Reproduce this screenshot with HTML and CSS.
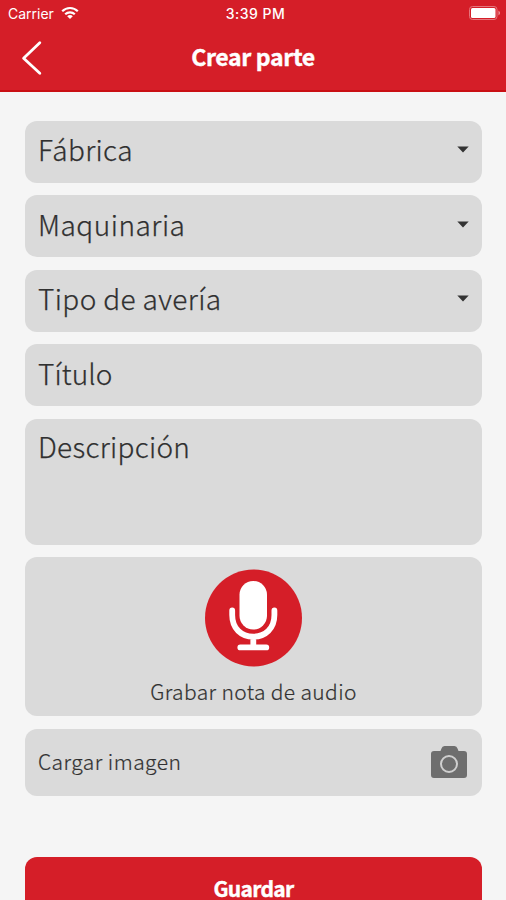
FILE: index.html
```html
<!DOCTYPE html>
<html lang="es">
<head>
<meta charset="utf-8">
<title>Crear parte</title>
<link rel="stylesheet" href="styles.css">
</head>
<body>
<header class="header">
  <div class="status">
    <div class="carrier"><span>Carrier</span>
      <svg class="wifi" width="18" height="14" viewBox="0 0 18 14" fill="none" stroke="#fff" stroke-width="2.2"><path d="M1.2 5.2C5.6.9 12.4.9 16.8 5.2M4.2 8.3c2.7-2.6 6.9-2.6 9.6 0"/><path d="M6.2 10.2c1.6-1.5 4-1.5 5.6 0L9 13z" fill="#fff" stroke="none"/></svg>
    </div>
    <span class="time">3:39 PM</span>
    <svg class="battery" width="32" height="14" viewBox="0 0 32 14"><rect x=".5" y=".5" width="27.5" height="13" rx="3" fill="none" stroke="#e5757c"/><rect x="2" y="2" width="24.5" height="10" rx="1.5" fill="#fff"/><path d="M29.5 4.5q3 2.5 0 5z" fill="#ed9da1"/></svg>
  </div>
  <nav class="nav">
    <svg class="back" width="22" height="36" viewBox="0 0 22 36" fill="none" stroke="#fff" stroke-width="2.8" stroke-linecap="round" stroke-linejoin="round"><path d="M18.800 2.800 2.600 18.200 18.800 33.200"/></svg>
    <h1 class="title">Crear parte</h1>
    <span></span>
  </nav>
</header>
<main class="form">
  <div class="field"><span class="fabrica">Fábrica</span><svg width="12" height="7" viewBox="0 0 12 7"><path d="M.3.5h11.4L6 6.5z" fill="#333"/></svg></div>
  <div class="field"><span class="maquinaria">Maquinaria</span><svg width="12" height="7" viewBox="0 0 12 7"><path d="M.3.5h11.4L6 6.5z" fill="#333"/></svg></div>
  <div class="field"><span class="tipo">Tipo de avería</span><svg width="12" height="7" viewBox="0 0 12 7"><path d="M.3.5h11.4L6 6.5z" fill="#333"/></svg></div>
  <div class="field"><span class="titulo">Título</span></div>
  <div class="field description"><span class="descripcion">Descripción</span></div>
  <div class="audio">
    <svg width="98" height="98" viewBox="0 0 98 98"><circle cx="48.500" cy="49" r="48.500" fill="#d51e28"/><rect x="34.500" y="12" width="27.500" height="48.500" rx="13.700" fill="#fff"/><g fill="none" stroke="#fff" stroke-linecap="round" stroke-width="5.800"><path d="M27.200 41.500v4.500c0 13.400 9 21.700 21.100 21.700S69.400 59.400 69.400 46v-4.500M48.300 68v10M35.300 78.400h26"/></g></svg>
    <span class="audio-label">Grabar nota de audio</span>
  </div>
  <div class="upload"><span class="upload-label">Cargar imagen</span>
    <svg width="38" height="34" viewBox="0 0 38 34"><path d="M5 6h5.500l1-2.500Q12.200 1 14.500 1h10q2.300 0 3 2.500l1 2.500H34q3 0 3 3v21q0 3-3 3H4q-3 0-3-3V9q0-3 3-3z" fill="#6e6e6e"/><circle cx="19" cy="19" r="8" fill="none" stroke="#cfcfcf" stroke-width="2"/></svg>
  </div>
  <button class="save">Guardar</button>
</main>
</body>
</html>
```
FILE: styles.css
```css
* { box-sizing: border-box; }
html { height: 100%; overflow: hidden; }
body {
  margin: 0;
  height: 900px;
  overflow: hidden;
  background: #f5f5f5;
  color: #303030;
  font-family: "Noto Sans CJK SC", "Noto Sans", sans-serif;
  font-weight: 300;
}
svg { display: block; flex: none; }
.header { height: 92px; background: #d51e28; border-bottom: 2px solid #c90f14; color: #fff; }
.status {
  height: 27px;
  padding: 0 5px 0 8px;
  display: grid;
  grid-template-columns: 1fr auto 1fr;
  align-items: center;
  font: 500 14px/27px Inter, sans-serif;
}
.carrier { display: flex; align-items: center; gap: 7px; font-weight: 400; }
.wifi { margin-top: -2px; }
.time { letter-spacing: .45px; padding-left: 2px; }
.battery { justify-self: end; margin-top: -1px; }
.nav { height: 63px; padding: 0 21px; display: grid; grid-template-columns: 1fr auto 1fr; align-items: center; }
.back { margin-top: -2px; }
.title { margin: -5px 0 0; font-size: 23px; line-height: 36px; font-weight: 700; letter-spacing: -.35px; -webkit-text-stroke: .4px #fff; }
.form { padding: 28.5px 24px 0 25px; display: flex; flex-direction: column; gap: 12.5px; }
.field {
  height: 62px;
  padding: 0 13px;
  display: flex;
  align-items: center;
  justify-content: space-between;
  border-radius: 12px;
  background: #dadada;
  font-size: 28px;
  line-height: 40px;
}
.field span { margin-top: -5px; -webkit-text-stroke: .25px #303030; }
.field svg { margin-top: -4px; }
.field.description { height: 126px; padding-top: 12px; align-items: flex-start; }
.fabrica { letter-spacing: .35px; }
.maquinaria { letter-spacing: .5px; }
.tipo { letter-spacing: .38px; }
.titulo { letter-spacing: .1px; }
.descripcion { letter-spacing: .28px; }
.audio {
  height: 159px;
  padding-top: 12px;
  display: flex;
  flex-direction: column;
  align-items: center;
  border-radius: 12px;
  background: #dadada;
}
.audio-label { margin-top: 8px; font-size: 21px; line-height: 32px; letter-spacing: .36px; -webkit-text-stroke: .2px #303030; }
.upload {
  height: 67px;
  padding: 0 14px 0 13px;
  display: flex;
  align-items: center;
  justify-content: space-between;
  border-radius: 12px;
  background: #dadada;
  font-size: 21px;
  line-height: 32px;
}
.upload-label { margin-top: -2px; letter-spacing: .45px; -webkit-text-stroke: .2px #303030; }
.upload svg { margin-top: -1px; }
.save {
  height: 62px;
  flex: none;
  margin-top: 49px;
  padding: 0 0 1px;
  border: 0;
  border-radius: 12px;
  background: #d51e28;
  color: #fff;
  font: 700 21px/36px "Noto Sans CJK SC", "Noto Sans", sans-serif;
  letter-spacing: -.7px;
  -webkit-text-stroke: .4px #fff;
}
```
